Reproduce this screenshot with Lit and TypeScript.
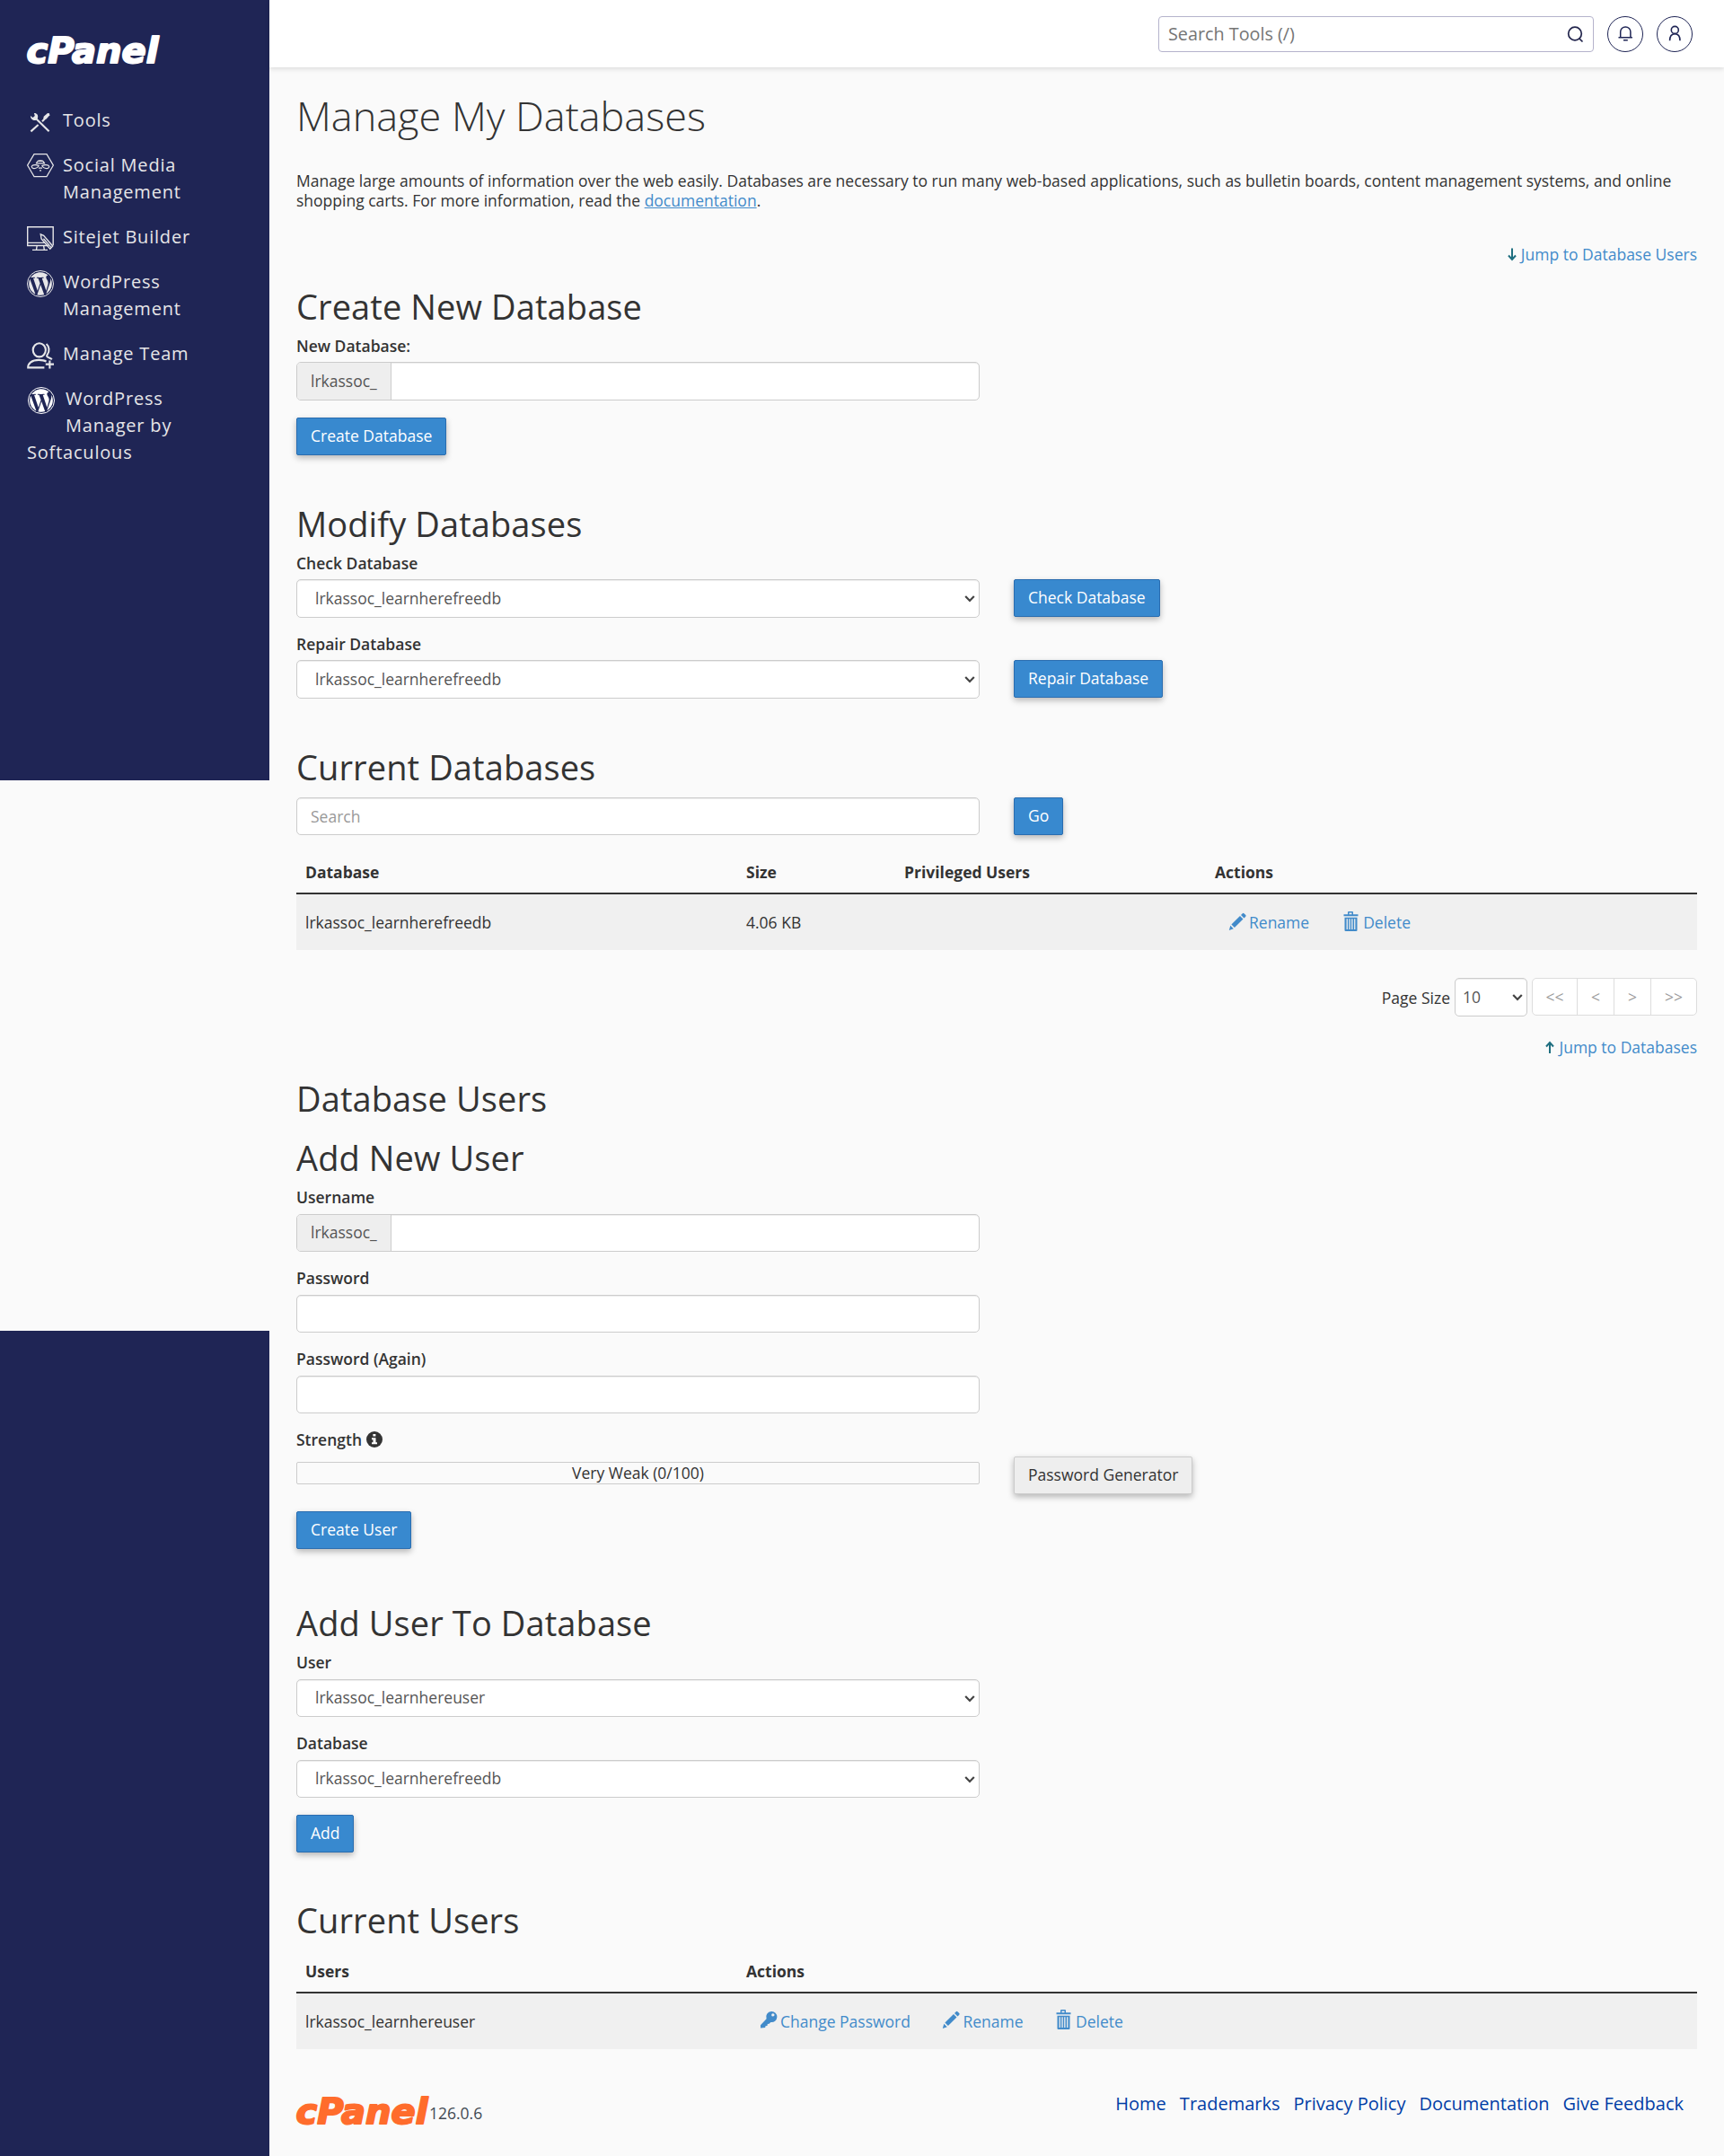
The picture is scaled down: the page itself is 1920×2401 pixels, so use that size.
import { LitElement, html, css, svg, nothing } from "lit";
import { customElement, property } from "lit/decorators.js";

const WP_PATH =
  "M21.469 6.825c.84 1.537 1.318 3.3 1.318 5.175 0 3.979-2.156 7.456-5.363 9.325l3.295-9.527c.615-1.54.82-2.771.82-3.864 0-.405-.026-.78-.07-1.11m-7.981.105c.647-.03 1.232-.105 1.232-.105.582-.075.514-.93-.067-.899 0 0-1.755.135-2.88.135-1.064 0-2.85-.15-2.85-.15-.585-.03-.661.855-.075.885 0 0 .54.061 1.125.09l1.68 4.605-2.37 7.08L5.354 6.9c.649-.03 1.234-.1 1.234-.1.585-.075.516-.93-.065-.896 0 0-1.746.138-2.874.138-.2 0-.438-.008-.69-.015C4.911 3.15 8.235 1.215 12 1.215c2.809 0 5.365 1.072 7.286 2.833-.046-.003-.091-.009-.141-.009-1.06 0-1.812.923-1.812 1.914 0 .89.513 1.643 1.06 2.531.411.72.89 1.643.89 2.977 0 .915-.354 1.994-.821 3.479l-1.075 3.585-3.9-11.61zM12 22.784c-1.059 0-2.081-.153-3.048-.437l3.237-9.406 3.315 9.087c.024.053.05.101.078.149-1.12.393-2.325.609-3.582.609M1.211 12c0-1.564.336-3.05.935-4.39L7.29 21.709C3.694 19.96 1.212 16.271 1.211 12";

const navIcons = {
  tools: svg`
    <g fill="none" stroke="currentColor" stroke-width="2.1">
      <path d="M10.5 11.5 24.6 25.2" />
      <path d="M4.4 25.4 12.6 18" />
      <path d="M17 14.2 20.4 10.8" />
    </g>
    <path fill="currentColor" d="M4 7.9 6.6 10l2.2-1.9-.9-3C10.6 4.6 13 7 12 10.5l-1.7 2.2C7.500 13.700 4 12 4 7.900z" />
    <path fill="currentColor" d="M18.200 10.800 19 8.500 23 5 25 5.200 25.300 7.300 21.700 11.400 19.400 12.100z" />`,
  social: svg`
    <g fill="none" stroke="currentColor" stroke-width="1.200">
      <path d="M8 .6h14l7.400 12.500L22 25.600H8L.6 13.100z" />
      <path d="M10.500 10.800a4.700 4.300 0 0 1 9 0z" />
      <path d="M12 8.400h6" />
      <path d="M13 13.400C8.500 11.800 4.500 13.100 5.400 15.200c1.200 2.600 6 1.400 7.800-1.500z" />
      <path d="M17 13.400c4.500-1.600 8.500-.3 7.600 1.800-1.200 2.600-6 1.400-7.800-1.500z" />
      <path d="M13 16.100h4M14 18.900h2" />
    </g>`,
  sitejet: svg`
    <g fill="none" stroke="currentColor" stroke-width="1.400">
      <path d="M24 22.500H.7V1.800h28.500v20.500M.7 19.400H20" />
      <path d="M11.200 22.500 10.500 27M18.600 22.500 19.300 27M6 27.400h17" />
      <path d="m15.300 10 .8 5 9.700 11.300 2.900-3.200L18.600 11.400z" />
      <path d="m18.400 14.800 8.600 9.800" />
    </g>`,
  team: svg`
    <g fill="none" stroke="currentColor" stroke-width="2.100">
      <ellipse cx="13.800" cy="8.800" rx="7.100" ry="7.600" />
      <path d="M21.600 2c3.300 2.600 4 8.500 1 12.200-1 1.400-.3 2 1 2.700 1.600.8 3 1.300 4.300 2.300" />
      <path d="M1.200 28.300c0-4.500 4-8.400 12-8.400 3.800 0 6.300.4 8.300 1.800M.2 28.400H19.400" />
      <path d="M20.800 24.600H30M25.400 20.400V29.600" />
    </g>`,
  wp: svg`
    <g transform="scale(1.250)">
      <path fill="currentColor" transform="translate(.6 .6) scale(.95)" d="${WP_PATH}" />
      <circle cx="12" cy="12" r="11.600" fill="none" stroke="currentColor" stroke-width=".8" />
    </g>`,
};

@customElement("cp-logo")
export class CpLogo extends LitElement {
  static styles = css`
    :host { display: block; width: 150px; height: 34px; }
    .logo { display: block; overflow: visible; }
    .word { font-family: "DejaVu Sans", sans-serif; font-weight: 700; font-style: italic; font-size: 39.500px; }
  `;
  render() {
    return html`<svg class="logo" width="150" height="34" viewBox="0 0 150 34">
      <text class="word" x="-.5" y="30" textLength="147" lengthAdjust="spacingAndGlyphs"
        fill="currentColor" stroke="currentColor" stroke-width="2" stroke-linejoin="round">cPanel</text>
    </svg>`;
  }
}

@customElement("action-icon")
export class ActionIcon extends LitElement {
  @property() name = "";
  static styles = css`
    :host { display: block; width: 20px; height: 22px; }
    .ico { display: block; }
  `;
  render() {
    const shapes: Record<string, unknown> = {
      pencil: svg`<path fill="currentColor" d="M.8 21 2.300 15.800 5.800 19.300z M3.400 14.600 13 5 16.500 8.500 6.900 18.100z M14 4l1.800-1.800q.8-.7 1.600 0l1.900 1.900q.7.800 0 1.600L17.500 7.500z" />`,
      trash: svg`<path fill="currentColor" fill-rule="evenodd" d="M1.500 3.200H6V1q0-1 1-1h4q1 0 1 1v2.200h5.500V5.300H1.500z M7.500 1.500v1.700h3V1.500z M2.500 6.800h14V21q0 1-1 1h-12q-1 0-1-1z M4.600 8.200V20h1.300V8.200z M7.400 8.200V20h1.300V8.200z M10.200 8.200V20h1.300V8.200z M13.100 8.200V20h1.300V8.200z" />`,
      key: svg`<path fill="currentColor" fill-rule="evenodd" d="M13 2a6 6 0 1 1-.6 11.900L10.600 15.800 8.800 16 8.500 18 6.500 18.300 6.200 20 1 20.500V17.300L7.600 10.300A6.100 6.100 0 0 1 13 2z M14.800 4.200a1.700 1.700 0 1 0 .1 3.400a1.700 1.700 0 0 0-.1-3.400z" />`,
    };
    return html`<svg class="ico" width="20" height="22" viewBox="0 0 20 22">${shapes[this.name]}</svg>`;
  }
}

@customElement("cp-select")
export class CpSelect extends LitElement {
  @property() value = "";
  @property({ type: Boolean, reflect: true }) small = false;
  @property({ type: Boolean, reflect: true }) short = false;
  static styles = css`
    :host { display: block; position: relative; width: 761px; height: 43px; }
    :host([small]) { width: 81px; }
    :host([short]) { height: 42px; }
    .field {
      appearance: none; box-sizing: border-box; width: 100%; height: 100%; margin: 0;
      padding: 0 20px 1px; border: 1px solid #ccc; border-radius: 5px; background: #fff;
      box-shadow: inset 0 1px 1px rgba(0, 0, 0, 0.075); color: #555;
      font: 400 17.500px/24px "Open Sans", sans-serif;
    }
    :host([small]) .field { padding: 0 8px 1px; }
    .arrow { position: absolute; right: 5px; top: 17px; pointer-events: none; }
  `;
  render() {
    return html`<select class="field"><option>${this.value}</option></select>
      <svg class="arrow" width="12" height="10" viewBox="0 0 12 10">
        <path d="M1.200 2 6 7 10.800 2" fill="none" stroke="#444" stroke-width="2.200" />
      </svg>`;
  }
}

interface NavItem { icon: keyof typeof navIcons; lines: string[]; wrap?: boolean }

const NAV: NavItem[] = [
  { icon: "tools", lines: ["Tools"] },
  { icon: "social", lines: ["Social Media", "Management"] },
  { icon: "sitejet", lines: ["Sitejet Builder"] },
  { icon: "wp", lines: ["WordPress", "Management"] },
  { icon: "team", lines: ["Manage Team"] },
  { icon: "wp", lines: ["WordPress", "Manager by", "Softaculous"], wrap: true },
];

@customElement("app-root")
export class AppRoot extends LitElement {
  static styles = css`
    :host {
      display: block; width: 1920px; height: 2401px; background: #fafafa; color: #333;
      font: 400 17.500px/24px "Open Sans", sans-serif; overflow: hidden;
    }
    * { box-sizing: border-box; }
    .page { display: flex; height: 2401px; }
    .side { width: 300px; display: flex; flex-direction: column; justify-content: space-between; }
    .panel { background: #1f2555; }
    .panel-top { height: 869px; padding: 40px 30px 0; color: #fff; }
    .panel-bottom { height: 919px; }
    .nav { margin-top: 45px; color: #e6e6e8; font-size: 20px; line-height: 30px; letter-spacing: 0.800px; }
    .item { display: flex; margin-bottom: 20px; }
    .nav-icon { flex: none; width: 30px; height: 30px; margin: 2px 10px -2px 0; overflow: visible; }
    .item.wrap { display: block; color: #fff; }
    .item.wrap .nav-icon { float: left; margin: 2px 12px 28px 1px; }
    .item.wrap .label { color: #e6e6e8; }
    .label span { display: block; }

    .content { flex: 1; min-width: 0; }
    .top {
      height: 75px; background: #fff; display: flex; align-items: center; justify-content: flex-end;
      gap: 15px; padding: 0 35px 0 0; box-shadow: 0 2px 5px rgba(0, 0, 0, 0.120);
    }
    .search {
      width: 485px; height: 40px; border: 1px solid #b5b3cc; border-radius: 4px; display: flex;
      align-items: center; padding: 0 10px; color: #757575; font-size: 19.800px;
    }
    .search-text { flex: 1; }
    .round {
      width: 40px; height: 40px; border: 1px solid #1f2555; border-radius: 50%;
      display: flex; align-items: center; justify-content: center;
    }
    .main { padding: 29px 30px 0; }
    h1 { margin: 0; font-size: 45px; line-height: 50px; font-weight: 300; }
    h2 { margin: 56px 0 0; font-size: 38px; line-height: 41px; font-weight: 400; letter-spacing: 0.100px; }
    p { margin: 36px 0 0; line-height: 22px; }
    a { color: #428bca; text-decoration: none; }
    .doc { text-decoration: underline; }
    .jump { display: flex; justify-content: flex-end; align-items: center; gap: 5px; margin-top: 37px; height: 24px; }
    .jump-up { margin-top: 22px; }
    .h-create { margin-top: 26px; }
    .h-users { margin-top: 24.500px; }
    .h-new { margin-top: 25px; }
    .h-assign { margin-top: 62px; }
    .h-last { margin-top: 55.500px; }
    .lab { display: flex; align-items: center; gap: 5px; height: 24px; margin-top: 17px; font-weight: 600; }
    h2 + .lab { margin-top: 11px; }
    .row { display: flex; align-items: flex-start; gap: 38px; margin-top: 6px; }
    .group, .input {
      display: flex; width: 761px; height: 43px; border: 1px solid #ccc; border-radius: 5px;
      background: #fff; box-shadow: inset 0 1px 1px rgba(0, 0, 0, 0.075); overflow: hidden;
    }
    .addon {
      width: 105px; padding: 0 15px 1px; background: #eee; border-right: 1px solid #ccc; color: #555;
      display: flex; align-items: center;
    }
    .input { align-items: center; padding: 0 15px; color: #999; }
    .h42 { height: 42px; }
    .btn {
      display: flex; width: fit-content; align-items: center; height: 42px; padding: 0 15px 2px;
      border: 1px solid #2a6db0; border-radius: 2px; background: #3889cf; color: #fff;
      font: inherit; box-shadow: 0 3px 7px rgba(0, 0, 0, 0.280);
    }
    .btn.plain { background: #eee; border-color: #ccc; color: #333; }
    .btn.below { margin-top: 19px; }
    .thead {
      display: grid; margin-top: 19px; height: 47px; border-bottom: 2px solid #333; font-weight: 700;
      align-items: center; padding: 0 0 1px 10px;
    }
    .trow { display: grid; height: 62px; background: #f0f0f0; align-items: center; padding-left: 10px; }
    .dbs { grid-template-columns: 491px 176px 346px 1fr; }
    .thead.usr { margin-top: 13.500px; }
    .usr { grid-template-columns: 491px 1fr; }
    .acts { display: flex; padding-left: 15px; gap: 37px; }
    .usr .acts { gap: 35.500px; }
    .act { display: flex; align-items: center; gap: 3px; }
    .act action-icon { margin-top: -3px; }
    .pager { display: flex; justify-content: flex-end; align-items: center; margin-top: 31px; height: 43px; gap: 5px; }
    .pages { display: flex; height: 42px; border: 1px solid #ddd; border-radius: 5px; background: #fff; align-self: flex-start; }
    .pg { width: 41px; display: flex; align-items: center; justify-content: center; color: #999; border-right: 1px solid #ddd; }
    .pg.wide { width: 50px; }
    .pg:last-child { border-right: 0; }
    .meter { width: 761px; height: 25px; margin-top: 6px; border: 1px solid #ccc; border-radius: 2px; text-align: center; line-height: 22px; }
    .foot { display: flex; justify-content: space-between; margin-top: 53px; padding-right: 15px; }
    .brand { display: flex; color: #ff6c2c; }
    .ver { margin: 6px 0 0 -2px; color: #434a54; }
    .links { display: flex; gap: 15px; font-size: 20px; line-height: 30px; margin-top: -7px; }
    .links a { color: #003da6; }
    .row.low { margin-top: 7px; }
    .row.find { margin-top: 13px; }
  `;

  private nav(i: NavItem) {
    return html`<div class="item ${i.wrap ? "wrap" : ""}">
      <svg class="nav-icon" viewBox="0 0 30 30">${navIcons[i.icon]}</svg>
      <div class="label">${i.lines.map((l) => html`<span>${l}</span>`)}</div>
    </div>`;
  }

  private act(icon: string, text: string) {
    return html`<a class="act"><action-icon name=${icon}></action-icon>${text}</a>`;
  }

  private select(label: string, value: string, button?: string) {
    return html`<div class="lab">${label}</div>
      <div class="row ${button ? "" : "low"}">
        <cp-select value=${value} ?short=${!button}></cp-select>
        ${button ? html`<button class="btn">${button}</button>` : nothing}
      </div>`;
  }

  render() {
    return html`<div class="page">
      <div class="side">
        <div class="panel panel-top">
          <cp-logo></cp-logo>
          <div class="nav">${NAV.map((i) => this.nav(i))}</div>
        </div>
        <div class="panel panel-bottom"></div>
      </div>
      <div class="content">
        <div class="top">
          <div class="search">
            <span class="search-text">Search Tools (/)</span>
            <svg width="20" height="20" viewBox="0 0 20 20" fill="none" stroke="#23264d" stroke-width="1.700">
              <circle cx="10" cy="9.500" r="7.300" /><path d="m14.800 14.800 3.700 3.700" />
            </svg>
          </div>
          <div class="round">
            <svg width="20" height="20" viewBox="0 0 20 20" fill="none" stroke="#1f2555" stroke-width="1.500">
              <path d="M4.700 13.800V7.500a5.600 5.600 0 0 1 11.200 0v6.300M2.500 13.800h15.400M8 16.700h4.800" />
            </svg>
          </div>
          <div class="round">
            <svg width="20" height="20" viewBox="0 0 20 20" fill="none" stroke="#1f2555" stroke-width="1.600">
              <circle cx="10.300" cy="5.400" r="4" /><path d="M4.600 17.300c0-4.800 2.400-7.500 5.700-7.500s5.700 2.700 5.700 7.500" />
            </svg>
          </div>
        </div>
        <div class="main">
          <h1>Manage My Databases</h1>
          <p>Manage large amounts of information over the web easily. Databases are necessary to run many web-based applications, such as bulletin boards, content management systems, and online shopping carts. For more information, read the <a class="doc">documentation</a>.</p>
          <div class="jump">
            <svg width="10" height="16" viewBox="0 0 10 16"><path d="M5 1.500v12M1 9.500l4 4.500 4-4.500" fill="none" stroke="#1f6f80" stroke-width="2" /></svg>
            <a>Jump to Database Users</a>
          </div>

          <h2 class="h-create">Create New Database</h2>
          <div class="lab">New Database:</div>
          <div class="row"><div class="group"><span class="addon">lrkassoc_</span></div></div>
          <button class="btn below">Create Database</button>

          <h2>Modify Databases</h2>
          ${this.select("Check Database", "lrkassoc_learnherefreedb", "Check Database")}
          ${this.select("Repair Database", "lrkassoc_learnherefreedb", "Repair Database")}

          <h2>Current Databases</h2>
          <div class="row find"><div class="input h42">Search</div><button class="btn">Go</button></div>
          <div class="thead dbs"><span>Database</span><span>Size</span><span>Privileged Users</span><span>Actions</span></div>
          <div class="trow dbs"><span>lrkassoc_learnherefreedb</span><span>4.06 KB</span><span></span>
            <div class="acts">${this.act("pencil", "Rename")}${this.act("trash", "Delete")}</div></div>
          <div class="pager"><span>Page Size</span><cp-select small value="10"></cp-select>
            <div class="pages"><span class="pg wide">&lt;&lt;</span><span class="pg">&lt;</span><span class="pg">&gt;</span><span class="pg wide">&gt;&gt;</span></div>
          </div>
          <div class="jump jump-up">
            <svg width="10" height="16" viewBox="0 0 10 16"><path d="M5 15V4M1 7.500 5 3l4 4.500" fill="none" stroke="#1f6f80" stroke-width="2" /></svg>
            <a>Jump to Databases</a>
          </div>

          <h2 class="h-users">Database Users</h2>
          <h2 class="h-new">Add New User</h2>
          <div class="lab">Username</div>
          <div class="row low"><div class="group h42"><span class="addon">lrkassoc_</span></div></div>
          <div class="lab">Password</div>
          <div class="row low"><div class="input h42"></div></div>
          <div class="lab">Password (Again)</div>
          <div class="row low"><div class="input h42"></div></div>
          <div class="lab">Strength
            <svg width="18" height="18" viewBox="0 0 18 18"><circle cx="9" cy="9" r="9" fill="#333" />
              <path d="M7.400 3h3v2.500h-3z M6 7.300h4.500v5h1.500v1.900H6v-1.900h1.500V9.200H6z" fill="#fff" /></svg>
          </div>
          <div class="row low"><div class="meter">Very Weak (0/100)</div><button class="btn plain">Password Generator</button></div>
          <button class="btn below">Create User</button>

          <h2 class="h-assign">Add User To Database</h2>
          ${this.select("User", "lrkassoc_learnhereuser")}
          ${this.select("Database", "lrkassoc_learnherefreedb")}
          <button class="btn below">Add</button>

          <h2 class="h-last">Current Users</h2>
          <div class="thead usr"><span>Users</span><span>Actions</span></div>
          <div class="trow usr"><span>lrkassoc_learnhereuser</span>
            <div class="acts">${this.act("key", "Change Password")}${this.act("pencil", "Rename")}${this.act("trash", "Delete")}</div></div>

          <div class="foot">
            <div class="brand"><cp-logo></cp-logo><span class="ver">126.0.6</span></div>
            <div class="links"><a>Home</a><a>Trademarks</a><a>Privacy Policy</a><a>Documentation</a><a>Give Feedback</a></div>
          </div>
        </div>
      </div>
    </div>`;
  }
}
